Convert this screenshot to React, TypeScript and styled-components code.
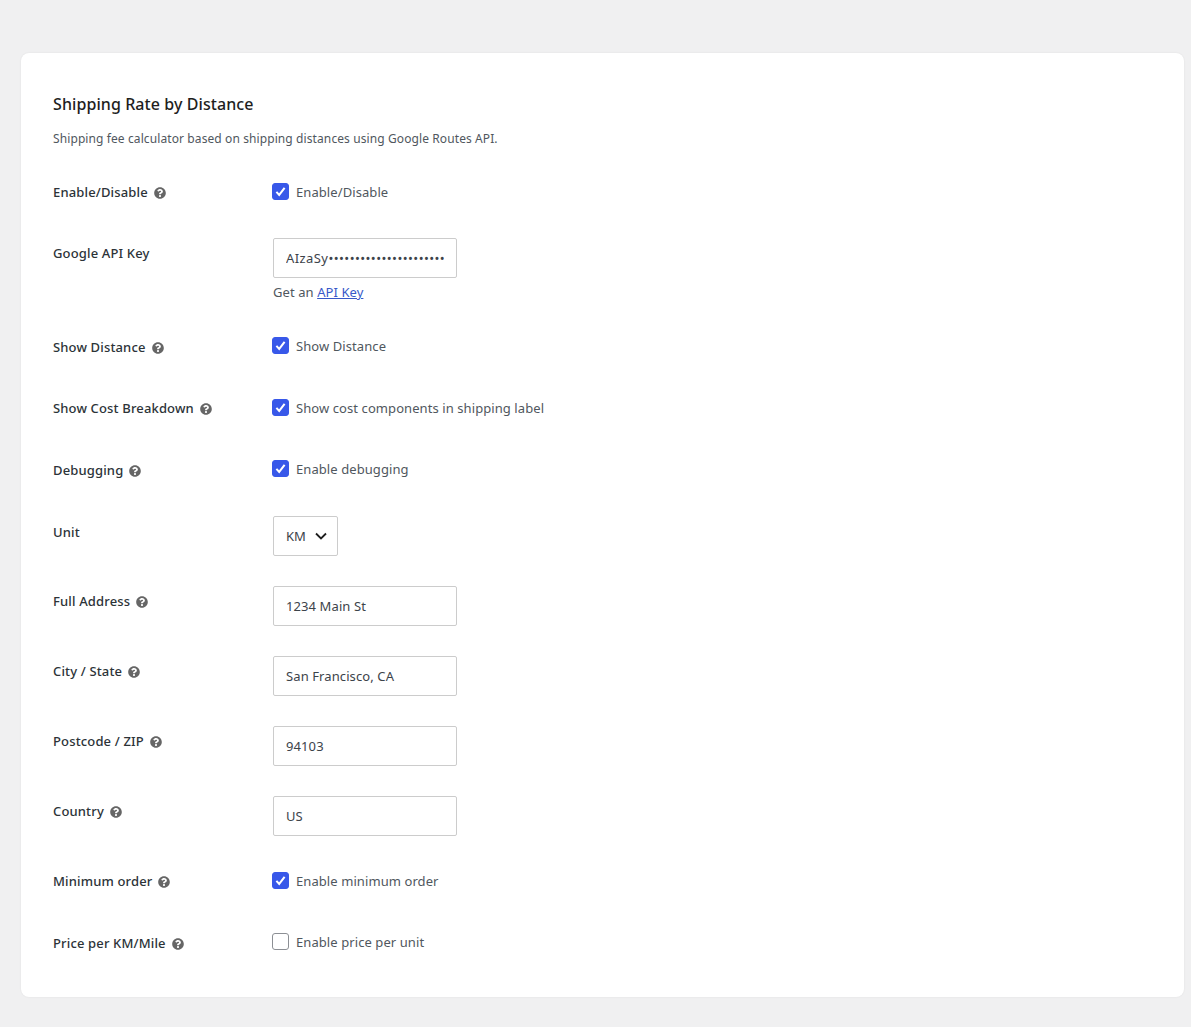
import React from "react";
import styled, { createGlobalStyle } from "styled-components";
import { FaQuestionCircle } from "react-icons/fa";

const GlobalStyle = createGlobalStyle`
  html, body {
    margin: 0;
    padding: 0;
    background: #f0f0f1;
    font-family: "Noto Sans", "Open Sans", sans-serif;
    font-size: 13px;
    color: #3c434a;
    letter-spacing: 0.08px;
  }
`;

const Page = styled.div`
  padding: 53px 7px 30px 21px;
`;

const Card = styled.div`
  background: #fff;
  border-radius: 8px;
  box-shadow: 0 0 2px rgba(0, 0, 0, 0.08);
  height: 944px;
  box-sizing: border-box;
  padding: 40px 32px 0;
`;

const Title = styled.h2`
  margin: 0;
  font-size: 16px;
  font-weight: 500;
  line-height: 22px;
  color: #1e1e1e;
`;

const Description = styled.p`
  margin: 14px 0 0;
  font-size: 12px;
  line-height: 20px;
  letter-spacing: 0.1px;
  color: #50575e;
`;

const Row = styled.div<{ $gap: number }>`
  display: grid;
  grid-template-columns: 220px 1fr;
  align-items: start;
  margin-top: ${(p) => p.$gap}px;
`;

const Label = styled.div<{ $offset?: number }>`
  display: flex;
  align-items: center;
  gap: 6px;
  height: 24px;
  margin-top: ${(p) => p.$offset ?? 0}px;
  font-size: 13px;
  font-weight: 500;
  letter-spacing: 0.15px;
  color: #2c3338;
`;

const Help = styled(FaQuestionCircle)`
  width: 12px;
  height: 12px;
  margin-top: 2px;
  color: #666;
`;

const CheckLine = styled.label`
  display: flex;
  align-items: center;
  gap: 7px;
  height: 24px;
  margin-left: -1px;
  font-size: 13px;
  color: #50575e;
`;

const Box = styled.span<{ $on: boolean }>`
  display: flex;
  align-items: center;
  justify-content: center;
  width: 17px;
  height: 17px;
  box-sizing: border-box;
  margin-top: -2px;
  border-radius: 3px;
  border: 1px solid ${(p) => (p.$on ? "#3858e9" : "#8c8f94")};
  background: ${(p) => (p.$on ? "#3858e9" : "#fff")};
`;

const Field = styled.input<{ $tracking?: number }>`
  display: block;
  width: 184px;
  height: 40px;
  box-sizing: border-box;
  padding: 0 12px;
  border: 1px solid #ccc;
  border-radius: 2px;
  outline: none;
  background: #fff;
  font-family: inherit;
  font-size: 13px;
  letter-spacing: ${(p) => p.$tracking ?? 0.1}px;
  color: #3c434a;
`;

const Hint = styled.div`
  margin-top: 5px;
  font-size: 13px;
  line-height: 18px;
  color: #50575e;
`;

const HintLink = styled.a`
  color: #3858c9;
  text-decoration: underline;
`;

const SelectWrap = styled.div`
  position: relative;
  width: 65px;
  height: 40px;
`;

const Select = styled.select`
  appearance: none;
  width: 100%;
  height: 100%;
  box-sizing: border-box;
  padding: 0 0 0 12px;
  border: 1px solid #ccc;
  border-radius: 2px;
  background: #fff;
  font-family: inherit;
  font-size: 13px;
  color: #3c434a;
`;

const Chevron = styled.svg`
  position: absolute;
  top: 15px;
  right: 10px;
  width: 14px;
  height: 10px;
  pointer-events: none;
`;

const Check = ({ on, children }: { on: boolean; children: string }) => (
  <CheckLine>
    <Box $on={on}>
      {on && (
        <svg width="13" height="13" viewBox="0 0 13 13">
          <path d="M2.4 6.8 5.2 9.9 10.6 2.9" fill="none" stroke="#fff" strokeWidth="2" />
        </svg>
      )}
    </Box>
    {children}
  </CheckLine>
);

const textFields = [
  { label: "Full Address", value: "1234 Main St", gap: 30 },
  { label: "City / State", value: "San Francisco, CA", gap: 30 },
  { label: "Postcode / ZIP", value: "94103", gap: 30 },
  { label: "Country", value: "US", gap: 30 },
];

const App = () => (
  <Page>
    <GlobalStyle />
    <Card>
      <Title>Shipping Rate by Distance</Title>
      <Description>Shipping fee calculator based on shipping distances using Google Routes API.</Description>

      <Row $gap={31}>
        <Label>Enable/Disable <Help /></Label>
        <Check on>Enable/Disable</Check>
      </Row>

      <Row $gap={34}>
        <Label $offset={3}>Google API Key</Label>
        <div>
          <Field readOnly $tracking={0.42} value={"AIzaSy" + "•".repeat(22)} />
          <Hint>Get an <HintLink href="#">API Key</HintLink></Hint>
        </div>
      </Row>

      <Row $gap={33}>
        <Label $offset={1}>Show Distance <Help /></Label>
        <Check on>Show Distance</Check>
      </Row>

      <Row $gap={37}>
        <Label>Show Cost Breakdown <Help /></Label>
        <Check on>Show cost components in shipping label</Check>
      </Row>

      <Row $gap={37}>
        <Label $offset={1}>Debugging <Help /></Label>
        <Check on>Enable debugging</Check>
      </Row>

      <Row $gap={34}>
        <Label $offset={4}>Unit</Label>
        <SelectWrap>
          <Select defaultValue="KM">
            <option>KM</option>
            <option>Mile</option>
          </Select>
          <Chevron viewBox="0 0 14 10">
            <path d="M2 2.5 7 7.5 12 2.5" fill="none" stroke="#1e1e1e" strokeWidth="1.8" />
          </Chevron>
        </SelectWrap>
      </Row>

      {textFields.map((f) => (
        <Row $gap={f.gap} key={f.label}>
          <Label $offset={3}>{f.label} <Help /></Label>
          <Field readOnly value={f.value} />
        </Row>
      ))}

      <Row $gap={33}>
        <Label>Minimum order <Help /></Label>
        <Check on>Enable minimum order</Check>
      </Row>

      <Row $gap={37}>
        <Label $offset={1}>Price per KM/Mile <Help /></Label>
        <Check on={false}>Enable price per unit</Check>
      </Row>
    </Card>
  </Page>
);

export default App;
